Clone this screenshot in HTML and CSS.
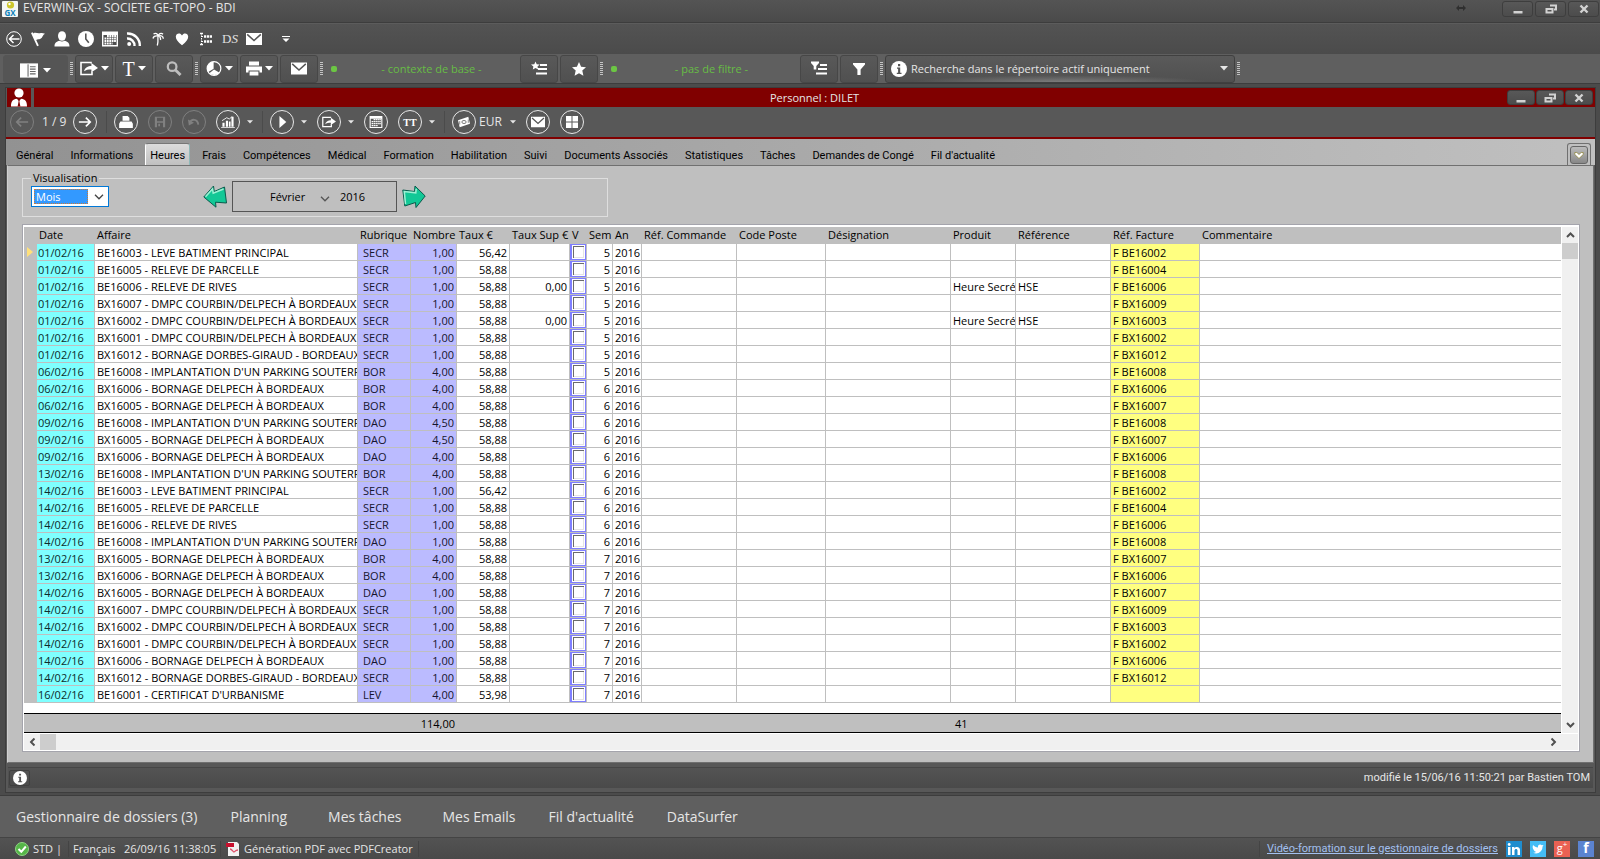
FILE: index.html
```html
<!DOCTYPE html>
<html lang="fr">
<head>
  <meta charset="UTF-8">
  <meta name="viewport" content="width=device-width, initial-scale=1.0">
  <title>EVERWIN-GX - SOCIETE GE-TOPO - BDI</title>
  <link rel="stylesheet" href="styles.css">
</head>
<body>

<!-- Icônes partagées -->
<svg class="sprite" aria-hidden="true">
  <symbol id="i-caret" viewBox="0 0 8 5"><path d="M0 0h8L4 4.6z"/></symbol>
  <symbol id="i-mail" viewBox="0 0 16 12"><path d="M0 0h16v12H0z"/><path d="M1.2 1.4L8 7.6l6.8-6.2" fill="none" stroke="#555" stroke-width="1.5"/></symbol>
  <symbol id="i-cal" viewBox="0 0 16 15"><path fill-rule="evenodd" d="M0 0h16v15H0zM1.4 3.4v10.2h13.2V3.4z"/><path d="M5 4.5h9M2.5 7h11.5M2.5 9.5h11.5M2.5 12h8" stroke="currentColor" stroke-width="1.8" stroke-dasharray="1.8 .6"/></symbol>
  <symbol id="i-export" viewBox="0 0 18 14"><path d="M11 2V1H1v12h11v-3" fill="none" stroke="currentColor" stroke-width="1.6"/><path d="M4 9.8C5 6 8 4.6 11.4 4.6V1.6L18 6.4l-6.6 4.4V8C8 8 6 8.4 4 9.800z"/></symbol>
  <symbol id="i-print" viewBox="0 0 16 14"><path d="M3 0h10v4H3zM0 5h16v6h-2.500V9h-11v2H0zM3.600 10h8.800v4H3.600z"/></symbol>
  <symbol id="i-star" viewBox="0 0 14 14"><path d="M7 0l2.100 4.700 4.900.5-3.700 3.400 1.100 5.200L7 11.200l-4.400 2.600 1.100-5.200L0 5.200l4.900-.5z"/></symbol>
  <symbol id="i-funnel" viewBox="0 0 12 12"><path d="M0 0h12v1.500L7.600 6.500V12H4.400V6.500L0 1.500z"/></symbol>
  <symbol id="i-info" viewBox="0 0 16 16"><circle cx="8" cy="8" r="8"/><path d="M7 3h2.200v2.200H7zM6 6.500h3.200v5.200h1.300v1.200H5.800v-1.200h1.300V7.700H6z" fill="#555"/></symbol>
  <symbol id="i-min" viewBox="0 0 12 10"><path d="M1.500 7h9v2.500h-9z"/></symbol>
  <symbol id="i-restore" viewBox="0 0 12 10"><path d="M5 1.500h6v4H9M1.500 5h6v3.600h-6z" fill="none" stroke="currentColor" stroke-width="2"/></symbol>
  <symbol id="i-close" viewBox="0 0 12 10"><path d="M2.500 1.500l7 7M9.500 1.500l-7 7" stroke="currentColor" stroke-width="2.400"/></symbol>
  <symbol id="i-chev" viewBox="0 0 10 6"><path d="M1 .8l4 4 4-4" fill="none" stroke="currentColor" stroke-width="1.300"/></symbol>
  <symbol id="i-scroll" viewBox="0 0 9 6"><path d="M1 1l3.500 3.500L8 1" fill="none" stroke="currentColor" stroke-width="2"/></symbol>
  <symbol id="i-left" viewBox="0 0 16 12"><path d="M15 6H2M7 1L2 6l5 5" fill="none" stroke="currentColor" stroke-width="1.900"/></symbol>
</svg>

<!-- Barre de titre -->
<header class="titlebar">
  <svg class="logo" viewBox="0 0 16 16"><rect width="16" height="16" rx="1" fill="#f4f6f4"/><circle cx="8.500" cy="4" r="3.600" fill="#cdc62c"/><circle cx="7.500" cy="3" r="1.200" fill="#fff"/><text x="8" y="15" text-anchor="middle" class="logo-text">GX</text></svg>
  <h1>EVERWIN-GX - SOCIETE GE-TOPO - BDI</h1>
  <svg class="resize" viewBox="0 0 10 6"><path d="M0 3l3-3v2h4V0l3 3-3 3V4H3v2z"/></svg>
  <button class="win-btn" aria-label="Réduire"><svg><use href="#i-min"/></svg></button>
  <button class="win-btn" aria-label="Restaurer"><svg><use href="#i-restore"/></svg></button>
  <button class="win-btn" aria-label="Fermer"><svg><use href="#i-close"/></svg></button>
</header>

<!-- Accès rapide -->
<nav class="quickbar">
  <button aria-label="Retour"><svg viewBox="0 0 16 16"><circle cx="8" cy="8" r="7.300" fill="none" stroke="currentColor"/><path d="M13.500 8H4M7.500 4L3.500 8l4 4" fill="none" stroke="currentColor" stroke-width="1.500"/></svg></button>
  <button aria-label="Marquer"><svg viewBox="0 0 16 16"><path d="M1 2l1.700-.8.700 1.200C5.500 1 7.500 2.800 10 2.200c1.700-.4 3-.2 5 .6-2.500 1.200-2.200 3.800-4.500 5-1.600.8-3 .2-4.300 1.100L8.800 14.500l-1.700.7z"/></svg></button>
  <button aria-label="Personnel"><svg viewBox="0 0 16 16"><ellipse cx="8" cy="5" rx="4" ry="4.800"/><path d="M.5 15.500c0-4 2-5 5-5.800 1.500 1.100 3.500 1.100 5 0 3 .8 5 1.800 5 5.800z"/></svg></button>
  <button aria-label="Temps"><svg viewBox="0 0 16 16"><circle cx="8" cy="8" r="8"/><path d="M7.800 2.500V8l3 3.800" fill="none" stroke="#555" stroke-width="1.600"/></svg></button>
  <button aria-label="Agenda"><svg><use href="#i-cal"/></svg></button>
  <button aria-label="Flux"><svg viewBox="0 0 16 16"><circle cx="3.200" cy="13" r="2"/><path d="M1 7.500a7 7 0 0 1 7.500 7.500M1 2.500a12 12 0 0 1 12.800 12.500" fill="none" stroke="currentColor" stroke-width="2.400"/></svg></button>
  <button aria-label="Congés"><svg viewBox="0 0 16 16"><path d="M3 7.500C3.500 5 5 4.500 8 5M3.500 3C6 1.500 7.500 3 8.300 5M8.300 5C8.500 3 11 1.300 13 3.200M8.300 5c2.500-1.200 5 .2 5 2.700M8.500 5c1.800.8 2.400 2 2 4M8.300 5C7 7 9 9 7.300 14.500" fill="none" stroke="currentColor" stroke-width="1.300"/></svg></button>
  <button aria-label="Favoris"><svg viewBox="0 0 16 16"><path d="M8 14.300C4 11 1.800 8.500 1.800 5.800 1.800 2 6.500 1.300 8 4.500 9.500 1.300 14.200 2 14.200 5.800 14.200 8.500 12 11 8 14.300z"/></svg></button>
  <button aria-label="Arborescence"><svg viewBox="0 0 16 16"><path d="M3.500 2v12M3.500 5.500h3M3.500 10.500h3" stroke="currentColor" stroke-dasharray="1.500 1" fill="none"/><path d="M2 2.500h3M2 13.500h3" stroke="currentColor" stroke-width="1.500"/><path d="M6 5.500h8M6 10.500h8" stroke="currentColor" stroke-width="2.400" stroke-dasharray="2.200 .7"/></svg></button>
  <button class="ds">D<i>S</i></button>
  <button aria-label="Messages"><svg><use href="#i-mail"/></svg></button>
  <button class="more" aria-label="Personnaliser"><svg viewBox="0 0 8 7"><path d="M0 0h8v1H0zM.5 2.500h7L4 6z"/></svg></button>
</nav>

<!-- Barre d'outils -->
<div class="toolbar">
  <button class="tool layout" aria-label="Disposition"><svg class="i18" viewBox="0 0 19 15"><path d="M0 0h19v15H0z"/><path d="M8.500 1v13" stroke="#555"/><path d="M10.500 3.500h6M10.500 6h6M10.500 8.500h6M10.500 11h6" stroke="#666" stroke-width="1.200"/></svg><svg class="caret"><use href="#i-caret"/></svg></button>
  <span class="grip"></span>
  <button class="tool" aria-label="Exporter"><svg class="i18"><use href="#i-export"/></svg><svg class="caret"><use href="#i-caret"/></svg></button>
  <button class="tool" aria-label="Texte"><span class="big-t">T</span><svg class="caret"><use href="#i-caret"/></svg></button>
  <button class="tool dim" aria-label="Rechercher"><svg class="i16" viewBox="0 0 16 16"><circle cx="6" cy="6" r="4.600" fill="none" stroke="currentColor" stroke-width="2.400"/><path d="M9 9l6 6" stroke="currentColor" stroke-width="3"/></svg></button>
  <span class="grip"></span>
  <button class="tool" aria-label="Graphique"><svg class="i16" viewBox="0 0 16 16"><circle cx="8" cy="8" r="7.300" fill="none" stroke="currentColor" stroke-width="1.300"/><path d="M7.600 8.200L1.500 12A8 8 0 0 1 7.600.5zM8 9l6 3.500A8 8 0 0 1 3 13z"/></svg><svg class="caret"><use href="#i-caret"/></svg></button>
  <button class="tool" aria-label="Imprimer"><svg class="i16"><use href="#i-print"/></svg><svg class="caret"><use href="#i-caret"/></svg></button>
  <button class="tool" aria-label="Envoyer"><svg class="i16"><use href="#i-mail"/></svg></button>
  <span class="grip"></span>
  <div class="context"><span class="dot"></span><span class="context-text">- contexte de base -</span></div>
  <button class="tool" aria-label="Liste des contextes"><svg class="i16" viewBox="0 0 16 14"><path d="M4.500 0l1.200 2.800 3 .3-2.200 2 .7 3-2.700-1.500L1.800 8l.6-2.900L0 3.100l3.300-.3z"/><path d="M9 3.500h7M7 7.500h9M5 12h11" stroke="currentColor" stroke-width="2"/></svg></button>
  <button class="tool" aria-label="Contexte favori"><svg class="i14"><use href="#i-star"/></svg></button>
  <span class="grip"></span>
  <div class="context"><span class="dot"></span><span class="context-text">- pas de filtre -</span></div>
  <button class="tool" aria-label="Liste des filtres"><svg class="i16" viewBox="0 0 16 14"><path d="M0 0h8v1.500L5.300 4.500V8H2.700V4.500L0 1.500z"/><path d="M9 3.500h7M7 7.500h9M5 12h11" stroke="currentColor" stroke-width="2"/></svg></button>
  <button class="tool" aria-label="Filtrer"><svg class="i12"><use href="#i-funnel"/></svg></button>
  <span class="grip"></span>
  <div class="search-scope">
    <svg class="i16"><use href="#i-info"/></svg>
    <select aria-label="Portée de la recherche"><option>Recherche dans le répertoire actif uniquement</option></select>
    <svg class="caret"><use href="#i-caret"/></svg>
  </div>
  <span class="grip"></span>
</div>

<!-- Fenêtre Personnel -->
<div class="workspace">
  <section class="window">
    <div class="window-title">
      <span class="window-icon"><svg viewBox="0 0 18 18"><ellipse cx="9" cy="4.500" rx="4.600" ry="4.500"/><path d="M1 18c0-6 2-7 5.500-7.800L9 12l2.500-1.800C15 11 17 12 17 18z"/><path d="M8.200 11.500h1.600l-.4 1.500 1 5H7.600l1-5z" fill="#800000"/></svg></span>
      <div class="window-caption">
        <h2>Personnel : DILET</h2>
        <div class="window-buttons">
          <button class="win-btn" aria-label="Réduire la fiche"><svg><use href="#i-min"/></svg></button>
          <button class="win-btn" aria-label="Restaurer la fiche"><svg><use href="#i-restore"/></svg></button>
          <button class="win-btn" aria-label="Fermer la fiche"><svg><use href="#i-close"/></svg></button>
        </div>
      </div>
    </div>

    <div class="window-tools">
      <button class="round off" aria-label="Précédent"><svg><use href="#i-left"/></svg></button>
      <span class="pager">1 / 9</span>
      <button class="round" aria-label="Suivant"><svg viewBox="0 0 16 12"><path d="M1 6h13M9 1l5 5-5 5" fill="none" stroke="currentColor" stroke-width="1.900"/></svg></button>
      <span class="sep"></span>
      <button class="round" aria-label="Imprimer la fiche"><svg viewBox="0 0 16 14"><path d="M4 0h6l2 2v3.500H4zM1.500 6.500h13L16 9v5H0V9z"/></svg></button>
      <button class="round off" aria-label="Enregistrer"><svg viewBox="0 0 14 14"><path fill-rule="evenodd" d="M1 1h12v12H1zM3.500 2v4h7V2zM3.500 8v5h7V8z"/><path d="M5 9h2v3H5z"/></svg></button>
      <button class="round off" aria-label="Annuler"><svg viewBox="0 0 16 14"><path d="M3 8c2-5 9-5 10 2" fill="none" stroke="currentColor" stroke-width="2.200"/><path d="M1 4l1 7 6-3z"/></svg></button>
      <button class="round" aria-label="Statistiques de la fiche"><svg viewBox="0 0 16 14"><path d="M1.500 8h2.500v4.500H1.500zM5.500 5.500H8v7H5.500zM9 6.500h2v6H9zM12 1h2.500v11.500H12zM0 13h16v1H0z"/><path d="M1 5.500L6.500 2l3 1.500L13 .5" fill="none" stroke="currentColor"/></svg></button>
      <button class="drop" aria-label="Choix de statistique"><svg><use href="#i-caret"/></svg></button>
      <span class="sep"></span>
      <button class="round" aria-label="Exécuter"><svg viewBox="0 0 14 14"><path d="M4 0l8 7-8 7z"/></svg></button>
      <button class="drop" aria-label="Choix de l'action"><svg><use href="#i-caret"/></svg></button>
      <button class="round" aria-label="Exporter la fiche"><svg><use href="#i-export"/></svg></button>
      <button class="drop" aria-label="Choix de l'export"><svg><use href="#i-caret"/></svg></button>
      <button class="round" aria-label="Agenda de la fiche"><svg><use href="#i-cal"/></svg></button>
      <button class="round tt">TT</button>
      <button class="drop" aria-label="Choix du texte"><svg><use href="#i-caret"/></svg></button>
      <span class="sep"></span>
      <button class="round money" aria-label="Devise"><svg viewBox="0 0 16 14"><path d="M1 5l12-4 2 8-12 4z"/><ellipse cx="8" cy="7" rx="2.500" ry="1.800" fill="none" stroke="#555" stroke-width=".9"/><path d="M3 6v4M13 4v4" stroke="#777"/></svg></button>
      <span class="currency">EUR</span>
      <button class="drop" aria-label="Choix de la devise"><svg><use href="#i-caret"/></svg></button>
      <button class="round" aria-label="Envoyer la fiche"><svg><use href="#i-mail"/></svg></button>
      <button class="round" aria-label="Vignettes"><svg viewBox="0 0 12 12"><path d="M0 0h5.500v5.500H0zM6.500 0H12v5.500H6.500zM0 6.500h5.500V12H0zM6.500 6.500H12V12H6.500z"/></svg></button>
    </div>

    <nav class="tabs">
      <a href="#">Général</a>
      <a href="#">Informations</a>
      <a href="#" class="active" aria-current="page">Heures</a>
      <a href="#">Frais</a>
      <a href="#">Compétences</a>
      <a href="#">Médical</a>
      <a href="#">Formation</a>
      <a href="#">Habilitation</a>
      <a href="#">Suivi</a>
      <a href="#">Documents Associés</a>
      <a href="#">Statistiques</a>
      <a href="#">Tâches</a>
      <a href="#">Demandes de Congé</a>
      <a href="#">Fil d'actualité</a>
      <span class="tab-menu"><button aria-label="Liste des onglets"><svg viewBox="0 0 10 8"><path d="M.8 1.500h2L5 3.500l2.200-2h2v2L5 7.500.8 3.500z" fill="#fff" stroke="#8a7f2e" stroke-width=".7"/></svg></button></span>
    </nav>

    <div class="pane">
      <fieldset class="view">
        <legend><label for="vue">Visualisation</label></legend>
        <div class="view-select">
          <select id="vue"><option>Mois</option></select>
          <svg class="chev"><use href="#i-chev"/></svg>
        </div>
        <div class="period">
          <button class="nav-arrow" aria-label="Mois précédent"><svg viewBox="0 0 24 23"><path d="M.8 12L10.500 1l.8 5.500L21.500 2l2 16-11-.8.500 5z" fill="#12c896" stroke="#0b5a4c"/><path d="M2.500 11.800L9.500 4l.7 4.300L20.500 4" fill="none" stroke="#9ff0d4" stroke-width="1.500"/></svg></button>
          <div class="period-box">
            <select aria-label="Mois"><option>Février</option></select>
            <svg class="chev"><use href="#i-chev"/></svg>
            <input type="text" aria-label="Année" value="2016">
          </div>
          <button class="nav-arrow" aria-label="Mois suivant"><svg viewBox="0 0 24 23"><path d="M23.200 11L13 1l-.5 5.500L.8 5l2 16 10.700-3.500.5 5z" fill="#12c896" stroke="#0b5a4c"/><path d="M3.500 19L2.300 6.500l11.500 1.300.4-4" fill="none" stroke="#9ff0d4" stroke-width="1.500"/></svg></button>
        </div>
      </fieldset>

      <div class="grid">
        <div class="grid-main">
          <table class="hours">
            <colgroup>
              <col class="c-mark"><col class="c-date"><col class="c-affaire"><col class="c-rub"><col class="c-nb"><col class="c-taux"><col class="c-sup"><col class="c-v"><col class="c-sem"><col class="c-an"><col class="c-cmd"><col class="c-poste"><col class="c-desi"><col class="c-prod"><col class="c-ref"><col class="c-fact"><col>
            </colgroup>
            <thead>
              <tr><th></th><th>Date</th><th>Affaire</th><th>Rubrique</th><th>Nombre</th><th>Taux €</th><th>Taux Sup €</th><th>V</th><th class="num">Sem</th><th>An</th><th>Réf. Commande</th><th>Code Poste</th><th>Désignation</th><th>Produit</th><th>Référence</th><th>Réf. Facture</th><th>Commentaire</th></tr>
            </thead>
            <tbody id="lignes"></tbody>
            <tfoot>
              <tr class="spacer"><td colspan="17"></td></tr>
              <tr class="total"><td colspan="4"></td><td class="num">114,00</td><td colspan="8"></td><td>41</td><td colspan="3"></td></tr>
            </tfoot>
          </table>
          <div class="vscroll">
            <button aria-label="Défiler vers le haut"><svg class="up"><use href="#i-scroll"/></svg></button>
            <span class="thumb"></span>
            <button class="end" aria-label="Défiler vers le bas"><svg><use href="#i-scroll"/></svg></button>
          </div>
        </div>
        <div class="hscroll">
          <button aria-label="Défiler vers la gauche"><svg class="left"><use href="#i-scroll"/></svg></button>
          <span class="thumb"></span>
          <button class="end" aria-label="Défiler vers la droite"><svg class="right"><use href="#i-scroll"/></svg></button>
        </div>
      </div>
    </div>

    <div class="window-status">
      <button class="info" aria-label="Informations sur la fiche"><svg><use href="#i-info"/></svg></button>
      <span>modifié le 15/06/16 11:50:21 par Bastien TOM</span>
    </div>
  </section>
</div>

<!-- Modules -->
<nav class="modules">
  <a href="#">Gestionnaire de dossiers (3)</a>
  <a href="#">Planning</a>
  <a href="#" class="wide">Mes tâches</a>
  <a href="#">Mes Emails</a>
  <a href="#">Fil d'actualité</a>
  <a href="#">DataSurfer</a>
</nav>

<!-- Barre d'état -->
<footer class="statusbar">
  <svg class="ok" viewBox="0 0 14 14"><circle cx="7" cy="7" r="6.500" fill="#55b648" stroke="#8fd485"/><path d="M3.500 7l2.800 2.800L10.800 4.500" fill="none" stroke="#fff" stroke-width="2"/></svg>
  <span class="std">STD |</span>
  <span class="lang">Français</span>
  <span class="clock">26/09/16 11:38:05</span>
  <svg class="pdf" viewBox="0 0 14 14"><path d="M2 0h9l2 2v12H2z" fill="#f2f2f2"/><path d="M0 1h8v4H0z" fill="#c8102e"/><path d="M4 7c2 0 3 3 4 3s1-2 4-2" fill="none" stroke="#e0506a" stroke-width="1.300"/></svg>
  <span class="pdf-text">Génération PDF avec PDFCreator</span>
  <a class="training" href="#">Vidéo-formation sur le gestionnaire de dossiers</a>
  <a class="social in" href="#" aria-label="LinkedIn"><svg viewBox="0 0 16 16"><path d="M2 6h2.500v8H2zM6 6h2.400v1.200C9.500 5.300 14 5.200 14 9v5h-2.500V9.500c0-2.300-3-2-3 0V14H6z"/><circle cx="3.200" cy="3.500" r="1.400"/></svg></a>
  <a class="social tw" href="#" aria-label="Twitter"><svg viewBox="0 0 16 16"><path d="M3 4c1.500 1.700 3 2.300 5 2.400C7.500 3.500 10.500 2.800 11.800 4.300L13.500 4l-1 1.800C12.500 11 7.500 13.800 3 11.700c1.500 0 2.500-.4 3-1-1.300-.2-2-.8-2.200-1.700C2.500 7.500 2.500 6 3 4z"/></svg></a>
  <a class="social gp" href="#">g<sup>+</sup></a>
  <a class="social fb" href="#">f</a>
</footer>

<script src="script.js"></script>
</body>
</html>
```

FILE: styles.css
```css
/* Style global */
* {
  box-sizing: border-box;
}

body {
  margin: 0;
  min-height: 100vh;
  display: flex;
  flex-direction: column;
  background-color: #5f5f5f;
  color: #e6e6e6;
  font-family: "Open Sans", "Noto Sans", sans-serif;
  font-size: 11px;
  line-height: 16px;
}

button, select, input {
  font: inherit;
  color: inherit;
  margin: 0;
  padding: 0;
  border: 0;
  background: none;
}

select {
  appearance: none;
}

a {
  color: inherit;
  text-decoration: none;
}

svg {
  display: block;
  fill: currentColor;
  flex: none;
}

.sprite {
  position: absolute;
  width: 0;
  height: 0;
}

.i12 { width: 12px; height: 12px; }
.i14 { width: 14px; height: 14px; }
.i16 { width: 16px; height: 15px; }
.i18 { width: 18px; height: 15px; }
.caret { width: 8px; height: 5px; }
.chev { width: 10px; height: 6px; }

/* Barre de titre */
.titlebar {
  display: flex;
  height: 23px;
  padding: 1px 1px 0 2px;
  gap: 2px;
  background: linear-gradient(#545454, #4a4a4a);
  border-bottom: 1px solid #3d3d3d;
}

.logo {
  width: 16px;
  height: 16px;
}

.logo-text {
  font: bold 8px "Open Sans", sans-serif;
  fill: #0f7fb8;
}

.titlebar h1 {
  margin: 0 auto 0 3px;
  font-size: 12px;
  font-weight: normal;
  line-height: 14px;
}

.resize {
  width: 10px;
  height: 6px;
  margin: 4px 34px 0 0;
  color: #2f2f2f;
}

.win-btn {
  display: flex;
  width: 31px;
  height: 16px;
  align-items: center;
  justify-content: center;
  border: 1px solid #3e3e3e;
  border-radius: 3px;
  background: linear-gradient(#585858, #4c4c4c);
  color: #d2d2d2;
}

.win-btn svg {
  width: 12px;
  height: 10px;
}

/* Accès rapide */
.quickbar {
  display: flex;
  height: 31px;
  padding-left: 6px;
  gap: 8px;
  align-items: center;
  background: linear-gradient(#535353, #4b4b4b);
  border-top: 1px solid #5c5c5c;
  color: #fff;
}

.quickbar svg {
  width: 16px;
  height: 16px;
}

.quickbar .ds {
  width: 16px;
  font: 13px "Liberation Serif", serif;
  color: #e0e0e0;
}

.quickbar .more {
  margin-left: 12px;
}

.quickbar .more svg {
  width: 8px;
  height: 7px;
}

/* Barre d'outils */
.toolbar {
  display: flex;
  height: 30px;
  padding-left: 3px;
  gap: 2px;
  align-items: center;
  border-bottom: 1px solid #3d3d3d;
}

.tool {
  display: flex;
  width: 38px;
  height: 28px;
  gap: 3px;
  align-items: center;
  justify-content: center;
  border: 1px solid #474747;
  border-radius: 3px;
  background: linear-gradient(#595959, #505050);
  color: #fff;
}

.tool.layout {
  width: 65px;
  gap: 5px;
  padding-top: 3px;
  border-color: #555;
  background: #555;
}

.tool.dim {
  color: #bdbdbd;
}

.big-t {
  font: 20px "Liberation Serif", serif;
  line-height: 20px;
}

.grip {
  width: 3px;
  height: 14px;
  background: repeating-linear-gradient(#c4c4c4 0 1px, transparent 1px 2px);
}

.context {
  display: flex;
  width: 193px;
  padding-left: 6px;
  align-items: center;
  color: #67bd45;
}

.context-text {
  flex: 1;
  padding-left: 8px;
  text-align: center;
}

.dot {
  width: 6px;
  height: 6px;
  border-radius: 2px;
  background-color: #6cc644;
}

.search-scope {
  display: flex;
  width: 350px;
  height: 28px;
  padding: 0 6px 0 5px;
  gap: 4px;
  align-items: center;
  border: 1px solid #404040;
  border-radius: 3px;
  background: radial-gradient(ellipse at bottom, #7c7c7c, transparent 60%) bottom / 100% 8px no-repeat, linear-gradient(#5a5a5a, #505050);
}

.search-scope .i16 {
  height: 16px;
  color: #fff;
}

.search-scope select {
  flex: 1;
}

/* Fenêtre Personnel */
.workspace {
  flex: 1;
  display: flex;
  padding: 3px 4px 2px 5px;
  background-color: #4b4b4b;
  border-bottom: 1px solid #3d3d3d;
}

.window {
  flex: 1;
  display: flex;
  flex-direction: column;
  min-width: 0;
  border: 1px solid #3d3d3d;
  background-color: #585858;
}

.window-title {
  display: flex;
  height: 19px;
  padding-left: 1px;
  gap: 3px;
}

.window-icon {
  width: 24px;
  padding-left: 3px;
  background-color: #800000;
}

.window-icon svg {
  width: 18px;
  height: 19px;
  color: #fff;
}

.window-caption {
  flex: 1;
  display: grid;
  grid-template-columns: 1fr auto 1fr;
  align-items: center;
  background-color: #800000;
}

.window-caption h2 {
  grid-column: 2;
  margin: 0;
  font-size: 11px;
  font-weight: normal;
}

.window-buttons {
  display: flex;
  gap: 1px;
  justify-content: flex-end;
  padding-right: 2px;
}

.window-buttons .win-btn {
  width: 28px;
  height: 15px;
}

.window-tools {
  display: flex;
  height: 32px;
  padding-left: 4px;
  align-items: center;
  border-bottom: 2px solid #800000;
}

.round {
  display: flex;
  width: 24px;
  height: 24px;
  margin-right: 10px;
  align-items: center;
  justify-content: center;
  border: 1px solid #e8e8e8;
  border-radius: 50%;
  color: #fff;
}

.round svg {
  width: 14px;
  height: 12px;
}

.round.off {
  border-color: #808080;
  color: #808080;
}

.round.tt {
  font: bold 10px "Liberation Serif", serif;
}

.round.money {
  margin-right: 3px;
}

.pager {
  width: 31px;
  margin-left: -2px;
  font-size: 12px;
}

.currency {
  width: 34px;
  font-size: 12px;
}

.drop {
  width: 8px;
  margin: 0 9px 0 -4px;
}

.drop svg {
  width: 6px;
  height: 4px;
  margin: 0 auto;
}

.sep {
  width: 1px;
  height: 22px;
  margin: 0 7px 0 -1px;
  background-color: #4b4b4b;
}

/* Onglets */
.tabs {
  display: flex;
  height: 26px;
  padding-left: 1px;
  align-items: flex-end;
  background: linear-gradient(90deg, #929292, #c0c0c0);
  color: #000;
  font-family: Roboto, "Open Sans", sans-serif;
}

.tabs a {
  height: 22px;
  padding: 5px 8px 0 9px;
}

.tabs .active {
  margin: 0 3px 0 4px;
  padding: 4px 4px 0;
  background: linear-gradient(#dcdcdc, #c0c0c0);
  border: 1px solid #8fb8b8;
  border-top-color: #777;
  border-bottom: 0;
  border-left-color: #fff;
  border-radius: 3px 3px 0 0;
}

.tab-menu {
  width: 24px;
  height: 22px;
  margin: 0 4px 0 auto;
  padding: 2px;
  border: 1px solid #707070;
  border-bottom: 0;
  border-radius: 3px 3px 0 0;
}

.tab-menu button {
  display: flex;
  width: 18px;
  height: 18px;
  align-items: center;
  justify-content: center;
  border: 1px solid #666;
  border-radius: 3px;
  background: linear-gradient(#bbb, #888);
}

.tab-menu svg {
  width: 10px;
  height: 8px;
}

.pane {
  flex: 1;
  margin: 0 1px 2px;
  padding: 4px 13px 10px 14px;
  border: 1px solid #707070;
  border-left-color: #d0d0d0;
  background-color: #bfbfbf;
  color: #000;
}

/* Choix de la période */
.view {
  display: flex;
  width: 586px;
  height: 47px;
  margin: 0 0 7px;
  padding: 0 0 0 8px;
  border: 1px solid #dedede;
}

.view legend {
  padding: 0 2px;
}

.view-select {
  display: flex;
  width: 78px;
  height: 21px;
  padding: 2px 4px 2px 2px;
  align-items: center;
  border: 1px solid #0078d7;
  background-color: #fff;
}

.view-select select {
  flex: 1;
  height: 15px;
  margin-right: 6px;
  padding-left: 1px;
  background-color: #3399ff;
  border: 1px dotted #c87a3c;
  line-height: 13px;
  color: #fff;
}

.view-select .chev {
  color: #444;
}

.period {
  display: flex;
  height: 31px;
  margin: -5px 0 0 94px;
  gap: 5px;
  align-items: center;
}

.nav-arrow svg {
  width: 24px;
  height: 23px;
}

.period-box {
  display: flex;
  width: 165px;
  height: 31px;
  padding-left: 37px;
  align-items: center;
  border: 1px solid #555;
}

.period-box select {
  width: 48px;
}

.period-box .chev {
  margin: 4px 10px 0 2px;
  color: #555;
}

.period-box input {
  width: 40px;
}

/* Tableau des heures */
.grid {
  padding: 2px 1px 1px;
  border: 1px solid #a4a4ac;
  background-color: #fff;
}

.grid-main {
  display: flex;
  gap: 1px;
}

.hours {
  flex: 1;
  width: 100%;
  min-width: 0;
  table-layout: fixed;
  border-collapse: separate;
  border-spacing: 0;
}

.c-mark { width: 13px; }
.c-date { width: 58px; }
.c-affaire { width: 263px; }
.c-rub { width: 53px; }
.c-nb { width: 46px; }
.c-taux { width: 53px; }
.c-sup { width: 60px; }
.c-v { width: 17px; }
.c-sem { width: 26px; }
.c-an { width: 29px; }
.c-cmd { width: 95px; }
.c-poste { width: 89px; }
.c-desi { width: 125px; }
.c-prod { width: 65px; }
.c-ref { width: 95px; }
.c-fact { width: 89px; }

.hours th,
.hours td {
  height: 17px;
  padding: 2px 2px 0;
  overflow: hidden;
  white-space: nowrap;
  text-align: left;
  font-weight: normal;
  line-height: 14px;
}

.hours th {
  padding: 1px 2px 2px;
  background-color: #bfbfbf;
}

.hours tbody td {
  border-right: 1px solid #bfbfbf;
  border-bottom: 1px solid #bfbfbf;
}

.hours tbody td:last-child {
  border-right: 0;
}

.hours .num {
  text-align: right;
}

.hours .mark {
  padding: 0 0 0 3px;
  background-color: #bfbfbf;
}

.mark svg {
  width: 6px;
  height: 10px;
  color: #ffe07a;
}

.hours .date {
  padding-left: 1px;
  background-color: #7fffff;
  color: #0d2b2b;
}

.hours .rub,
.hours .nb {
  background-color: #bbbbff;
  color: #15152e;
}

.hours .rub {
  padding-left: 5px;
}

.hours .check {
  padding: 0;
  background-color: #7f7fff;
}

.check input {
  display: block;
  appearance: none;
  width: 13px;
  height: 14px;
  margin: 1px 1px 1px 2px;
  border: 1px solid #fff;
  background-color: #fff;
  box-shadow: inset 1px 1px #6b6b6b, inset -1px -1px #e4e4e4;
}

.hours .fact {
  background-color: #ffff80;
}

.hours .spacer td {
  height: 10px;
  padding: 0;
}

.hours .total td {
  height: 20px;
  border-top: 1px solid #000;
  border-bottom: 1px solid #000;
  background-color: #bfbfbf;
}

.hours .total td:nth-child(4) {
  padding-left: 4px;
}

/* Barres de défilement */
.vscroll,
.hscroll {
  display: flex;
  background-color: #f0f0f0;
  color: #505050;
}

.vscroll {
  flex-direction: column;
  width: 16px;
}

.hscroll {
  height: 16px;
  margin-top: 1px;
  padding-right: 17px;
}

.vscroll button,
.hscroll button {
  display: flex;
  width: 16px;
  height: 16px;
  align-items: center;
  justify-content: center;
}

.vscroll svg,
.hscroll svg {
  width: 9px;
  height: 6px;
}

.vscroll .end { margin-top: auto; }
.hscroll .end { margin-left: auto; }
.up { transform: rotate(180deg); }
.left { transform: rotate(90deg); }
.right { transform: rotate(-90deg); }

.thumb {
  width: 16px;
  height: 16px;
  background-color: #cdcdcd;
}

/* Pied de fenêtre */
.window-status {
  display: flex;
  height: 21px;
  margin: 2px 2px 4px;
  padding: 0 3px 0 1px;
  align-items: center;
  justify-content: space-between;
  border-top: 1px solid #464646;
  background: linear-gradient(#545454, #4a4a4a);
}

.window-status,
.training {
  font-family: Roboto, "Open Sans", sans-serif;
}

.info {
  display: flex;
  width: 21px;
  height: 16px;
  align-items: center;
  justify-content: center;
  border: 1px solid #404040;
  border-radius: 2px;
  color: #fff;
}

.info svg {
  width: 14px;
  height: 14px;
}

/* Modules */
.modules {
  display: flex;
  height: 41px;
  padding-left: 16px;
  gap: 33px;
  align-items: center;
  font-size: 14px;
}

.modules .wide {
  padding: 0 8px;
}

/* Barre d'état */
.statusbar {
  display: flex;
  height: 22px;
  padding: 0 6px 0 15px;
  align-items: center;
  background: linear-gradient(#535353, #494949);
  border-top: 1px solid #444;
}

.ok,
.pdf {
  width: 14px;
  height: 14px;
}

.std {
  width: 36px;
  margin-left: 4px;
  border-right: 1px solid #444;
}

.lang {
  width: 55px;
  padding-left: 4px;
}

.clock {
  width: 97px;
  border-right: 1px solid #444;
}

.pdf {
  margin-left: 5px;
}

.pdf-text {
  padding: 0 5px 0 4px;
  border-right: 1px solid #444;
}

.training {
  margin-left: auto;
  padding-left: 7px;
  border-left: 1px solid #444;
  color: #a3c0f0;
  text-decoration: underline;
}

.social {
  width: 16px;
  height: 16px;
  margin-left: 8px;
  color: #fff;
  text-align: center;
  line-height: 14px;
}

.social sup {
  font-size: 8px;
  line-height: 0;
}

.in { background-color: #1f8dce; }
.tw { background-color: #45bdf5; }
.gp { background-color: #ea6153; }
.fb {
  background-color: #5b83d0;
  font-size: 14px;
  font-weight: bold;
}
```

FILE: script.js
```js
// Date, affaire, rubrique, nombre, taux, semaine, facture, heure supplémentaire
const heures = [
  ["01/02/16", "BE16003 - LEVE BATIMENT PRINCIPAL", "SECR", "1,00", "56,42", 5, "F BE16002"],
  ["01/02/16", "BE16005 - RELEVE DE PARCELLE", "SECR", "1,00", "58,88", 5, "F BE16004"],
  ["01/02/16", "BE16006 - RELEVE DE RIVES", "SECR", "1,00", "58,88", 5, "F BE16006", true],
  ["01/02/16", "BX16007 - DMPC COURBIN/DELPECH À BORDEAUX", "SECR", "1,00", "58,88", 5, "F BX16009"],
  ["01/02/16", "BX16002 - DMPC COURBIN/DELPECH À BORDEAUX", "SECR", "1,00", "58,88", 5, "F BX16003", true],
  ["01/02/16", "BX16001 - DMPC COURBIN/DELPECH À BORDEAUX", "SECR", "1,00", "58,88", 5, "F BX16002"],
  ["01/02/16", "BX16012 - BORNAGE DORBES-GIRAUD - BORDEAUX", "SECR", "1,00", "58,88", 5, "F BX16012"],
  ["06/02/16", "BE16008 - IMPLANTATION D'UN PARKING SOUTERRAIN", "BOR", "4,00", "58,88", 5, "F BE16008"],
  ["06/02/16", "BX16006 - BORNAGE DELPECH À BORDEAUX", "BOR", "4,00", "58,88", 6, "F BX16006"],
  ["06/02/16", "BX16005 - BORNAGE DELPECH À BORDEAUX", "BOR", "4,00", "58,88", 6, "F BX16007"],
  ["09/02/16", "BE16008 - IMPLANTATION D'UN PARKING SOUTERRAIN", "DAO", "4,50", "58,88", 6, "F BE16008"],
  ["09/02/16", "BX16005 - BORNAGE DELPECH À BORDEAUX", "DAO", "4,50", "58,88", 6, "F BX16007"],
  ["09/02/16", "BX16006 - BORNAGE DELPECH À BORDEAUX", "DAO", "4,00", "58,88", 6, "F BX16006"],
  ["13/02/16", "BE16008 - IMPLANTATION D'UN PARKING SOUTERRAIN", "BOR", "4,00", "58,88", 6, "F BE16008"],
  ["14/02/16", "BE16003 - LEVE BATIMENT PRINCIPAL", "SECR", "1,00", "56,42", 6, "F BE16002"],
  ["14/02/16", "BE16005 - RELEVE DE PARCELLE", "SECR", "1,00", "58,88", 6, "F BE16004"],
  ["14/02/16", "BE16006 - RELEVE DE RIVES", "SECR", "1,00", "58,88", 6, "F BE16006"],
  ["14/02/16", "BE16008 - IMPLANTATION D'UN PARKING SOUTERRAIN", "DAO", "1,00", "58,88", 6, "F BE16008"],
  ["13/02/16", "BX16005 - BORNAGE DELPECH À BORDEAUX", "BOR", "4,00", "58,88", 7, "F BX16007"],
  ["13/02/16", "BX16006 - BORNAGE DELPECH À BORDEAUX", "BOR", "4,00", "58,88", 7, "F BX16006"],
  ["14/02/16", "BX16005 - BORNAGE DELPECH À BORDEAUX", "DAO", "1,00", "58,88", 7, "F BX16007"],
  ["14/02/16", "BX16007 - DMPC COURBIN/DELPECH À BORDEAUX", "SECR", "1,00", "58,88", 7, "F BX16009"],
  ["14/02/16", "BX16002 - DMPC COURBIN/DELPECH À BORDEAUX", "SECR", "1,00", "58,88", 7, "F BX16003"],
  ["14/02/16", "BX16001 - DMPC COURBIN/DELPECH À BORDEAUX", "SECR", "1,00", "58,88", 7, "F BX16002"],
  ["14/02/16", "BX16006 - BORNAGE DELPECH À BORDEAUX", "DAO", "1,00", "58,88", 7, "F BX16006"],
  ["14/02/16", "BX16012 - BORNAGE DORBES-GIRAUD - BORDEAUX", "SECR", "1,00", "58,88", 7, "F BX16012"],
  ["16/02/16", "BE16001 - CERTIFICAT D'URBANISME", "LEV", "4,00", "53,98", 7, ""]
];

const curseur = '<svg viewBox="0 0 6 10"><path d="M0 0l6 5-6 5z"/></svg>';

document.getElementById("lignes").innerHTML = heures.map((h, i) => `
  <tr>
    <td class="mark">${i === 0 ? curseur : ""}</td>
    <td class="date">${h[0]}</td>
    <td>${h[1]}</td>
    <td class="rub">${h[2]}</td>
    <td class="nb num">${h[3]}</td>
    <td class="num">${h[4]}</td>
    <td class="num">${h[7] ? "0,00" : ""}</td>
    <td class="check"><input type="checkbox" aria-label="Valider la ligne ${i + 1}"></td>
    <td class="num">${h[5]}</td>
    <td>2016</td>
    <td></td>
    <td></td>
    <td></td>
    <td>${h[7] ? "Heure Secrétariat" : ""}</td>
    <td>${h[7] ? "HSE" : ""}</td>
    <td class="fact">${h[6]}</td>
    <td></td>
  </tr>`).join("");
```
